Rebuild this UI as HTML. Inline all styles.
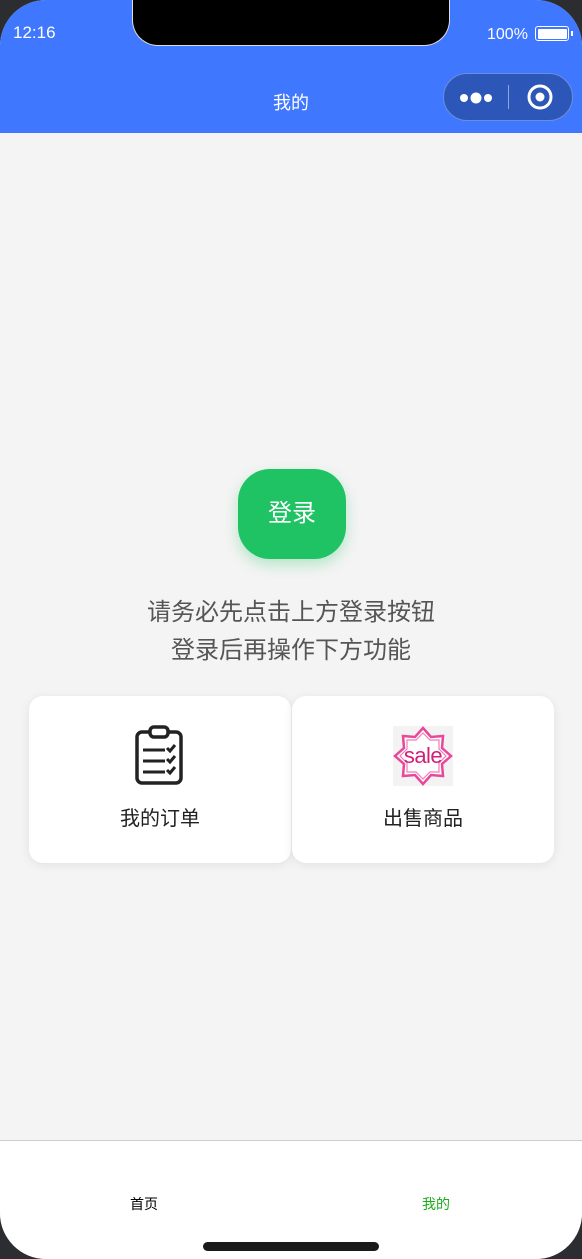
<!DOCTYPE html>
<html><head><meta charset="utf-8"><style>
*{margin:0;padding:0;box-sizing:border-box}
body{width:582px;height:1259px;background:#2b2d31;overflow:hidden;font-family:"Liberation Sans","Noto Sans CJK SC",sans-serif;position:relative}
.screen{position:absolute;left:0;top:0;width:582px;height:1259px;background:#f4f4f4;border-radius:46px;overflow:hidden}
.top{position:absolute;left:0;top:0;width:582px;height:133px;background:#3f77ff}
.notch{position:absolute;left:132px;top:-2px;width:318px;height:48px;background:#000;border:1px solid #ddd;border-top:none;border-radius:0 0 26px 26px}
.time{position:absolute;left:13px;top:23px;color:#fff;font-size:17px}
.bat{position:absolute;left:487px;top:26px;color:#fff;font-size:16px}
.batt{position:absolute;left:535px;top:26px;width:34px;height:15px;border:1.5px solid #fff;border-radius:3px;padding:1.5px}
.batt i{display:block;width:100%;height:100%;background:#fff;border-radius:1px}
.batt:after{content:"";position:absolute;right:-5px;top:4px;width:2px;height:5px;background:#fff}
.title{position:absolute;left:0;width:582px;top:89px;text-align:center;color:#fff;font-size:18px}
.cap{position:absolute;left:443px;top:73px;width:130px;height:48px;border-radius:24px;background:#2c56b8;border:1px solid #6b8fd8}
.cap .sep{position:absolute;left:64px;top:11px;width:1px;height:24px;background:#8ea6de}
.btn{position:absolute;left:238px;top:469px;width:108px;height:90px;border-radius:32px;background:#20c363;color:#fff;font-size:24px;text-align:center;line-height:90px;box-shadow:0 6px 14px rgba(32,195,99,.3)}
.tip{position:absolute;left:0;width:582px;text-align:center;color:#555;font-size:24px}
.card{position:absolute;top:696px;width:262px;height:167px;background:#fff;border-radius:14px;box-shadow:0 2px 10px rgba(0,0,0,.08)}
.card .lab{position:absolute;top:106px;width:100%;text-align:center;font-size:20px;color:#222}
.tab{position:absolute;left:0;top:1140px;width:582px;height:119px;background:#fff;border-top:1.5px solid #ccc}
.tab span{position:absolute;top:53px;font-size:14px}
.home{position:absolute;left:203px;top:1242px;width:176px;height:9px;border-radius:5px;background:#1a1a1a}
</style></head><body>
<div class="screen">
<div class="top">
<div class="notch"></div>
<div class="time">12:16</div>
<div class="bat">100%</div>
<div class="batt"><i></i></div>
<div class="title">我的</div>
<div class="cap">
<svg width="130" height="48" style="position:absolute;left:0;top:0">
<circle cx="20" cy="24" r="4" fill="#fff"/><circle cx="32" cy="24" r="5.5" fill="#fff"/><circle cx="44" cy="24" r="4" fill="#fff"/>
<circle cx="96" cy="23" r="11" fill="none" stroke="#fff" stroke-width="3"/><circle cx="96" cy="23" r="4.5" fill="#fff"/>
</svg>
<div class="sep"></div>
</div>
</div>
<div class="btn">登录</div>
<div class="tip" style="top:592px">请务必先点击上方登录按钮</div>
<div class="tip" style="top:630px">登录后再操作下方功能</div>
<div class="card" style="left:29px">
<svg style="position:absolute;left:105px;top:28px" width="50" height="62" viewBox="0 0 50 62">
<rect x="3" y="8" width="44" height="51" rx="5" fill="none" stroke="#222" stroke-width="3.5"/>
<rect x="16" y="3" width="18" height="10" rx="4" fill="#fff" stroke="#222" stroke-width="3.5"/>
<g stroke="#222" stroke-width="3" fill="none">
<line x1="9" y1="26" x2="31" y2="26"/><line x1="9" y1="37" x2="31" y2="37"/><line x1="9" y1="48" x2="31" y2="48"/>
<path d="M33 24l3 3 5-6M33 35l3 3 5-6M33 46l3 3 5-6"/></g>
</svg>
<div class="lab">我的订单</div>
</div>
<div class="card" style="left:292px">
<svg style="position:absolute;left:101px;top:30px" width="60" height="60" viewBox="0 0 60 60">
<rect width="60" height="60" fill="#f3f3f3"/>
<polygon points="30,2 38,11 50,10 49,22 58,30 49,38 50,50 38,49 30,58 22,49 10,50 11,38 2,30 11,22 10,10 22,11" fill="#fff" stroke="#e8479a" stroke-width="2.5"/>
<polygon points="30,7 37,14 46,14 46,23 53,30 46,37 46,46 37,46 30,53 23,46 14,46 14,37 7,30 14,23 14,14 23,14" fill="none" stroke="#f07cb8" stroke-width="1.2"/>
<text x="30" y="37" text-anchor="middle" font-family="Liberation Sans" font-size="22" fill="#d0207a" letter-spacing="-0.5">sale</text>
</svg>
<div class="lab">出售商品</div>
</div>
<div class="tab">
<span style="left:130px;color:#000">首页</span>
<span style="left:422px;color:#1aad19">我的</span>
</div>
<div class="home"></div>
</div>
</body></html>
